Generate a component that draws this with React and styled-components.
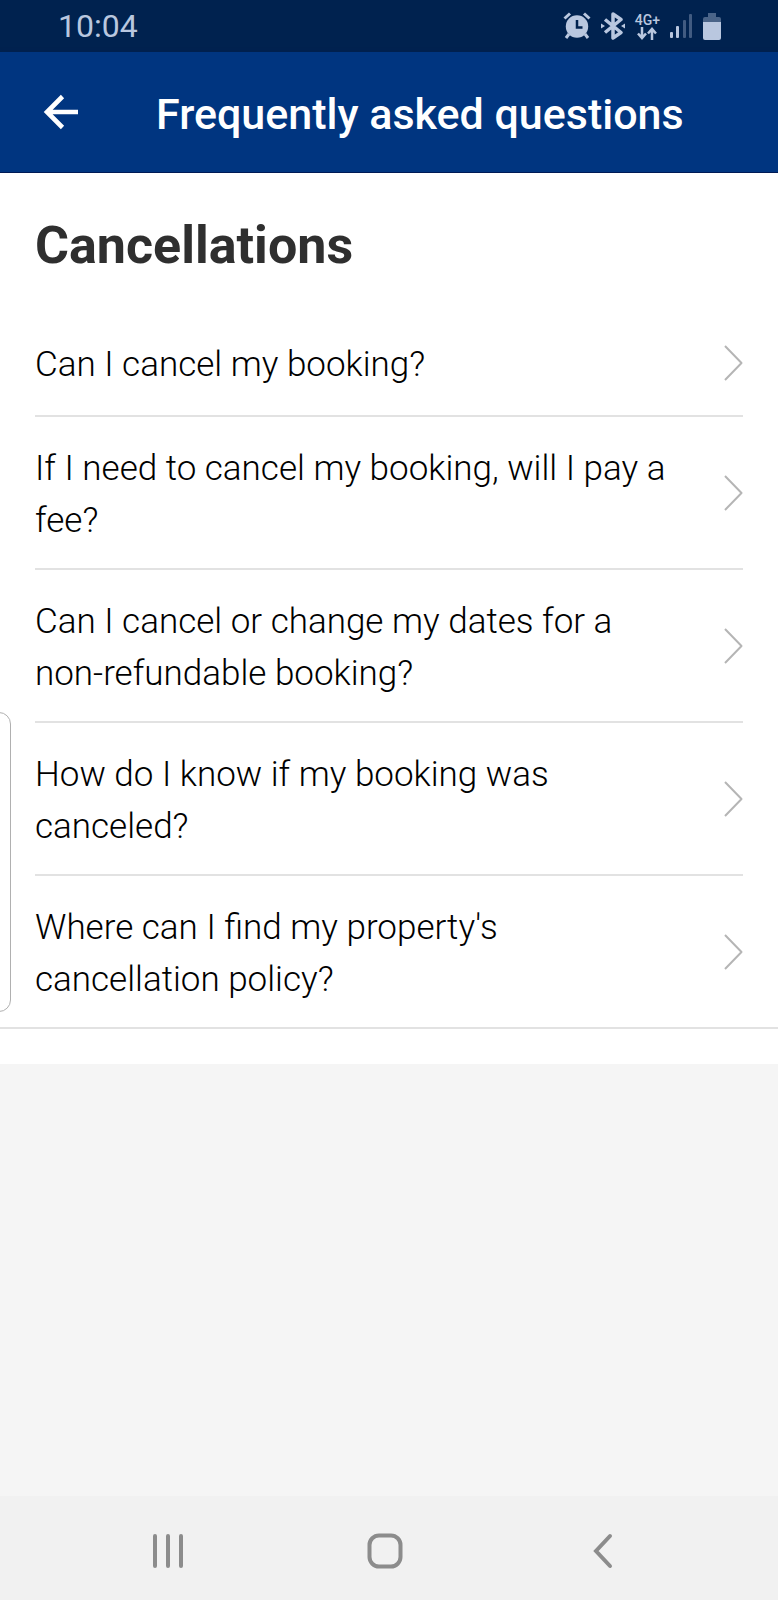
import React from "react";
import styled, { createGlobalStyle } from "styled-components";

const GlobalStyle = createGlobalStyle`
  * { box-sizing: border-box; }
  html, body { margin: 0; padding: 0; }
  body {
    background: #f5f5f5;
    font-family: Roboto, "Liberation Sans", sans-serif;
    color: #262626;
  }
`;

const Screen = styled.div`
  display: flex;
  flex-direction: column;
  min-height: 100vh;
`;

const StatusBar = styled.div`
  display: flex;
  align-items: center;
  justify-content: space-between;
  height: 52px;
  padding: 0 57px 0 58px;
  background: #00224f;
  color: #b9c7df;
`;

const Clock = styled.time`
  font-size: 32px;
  line-height: 52px;
`;

const StatusIcons = styled.div`
  display: flex;
  align-items: center;
  gap: 10px;

  svg { display: block; }
`;

const Network = styled.div`
  display: flex;
  flex-direction: column;
  align-items: center;
  font-size: 14px;
  line-height: 14px;
  font-weight: 500;
`;

const AppBar = styled.header`
  display: flex;
  align-items: center;
  height: 121px;
  padding: 0 24px;
  background: #003580;
  border-bottom: 1px solid #001a55;
  box-shadow: 0 1px 6px rgba(0, 20, 80, 0.2);
  color: #fff;
`;

const IconButton = styled.button`
  display: flex;
  align-items: center;
  justify-content: center;
  width: 72px;
  height: 72px;
  padding: 0;
  border: 0;
  background: none;
  color: inherit;
`;

const Title = styled.h1`
  margin: 0 0 0 60px;
  padding-top: 4px;
  font-size: 43px;
  line-height: 56px;
  font-weight: 500;
  white-space: nowrap;
`;

const Faq = styled.main`
  padding-bottom: 35px;
  background: #fff;
`;

const SectionTitle = styled.h2`
  margin: 0;
  padding: 41px 35px 32px;
  font-size: 52px;
  line-height: 64px;
  font-weight: 700;
  color: #2f2f2f;
`;

const Questions = styled.ul`
  margin: 0;
  padding: 0;
  border-bottom: 2px solid #e2e2e2;
  list-style: none;
`;

const Question = styled.li`
  margin: 0 35px;

  & + & { border-top: 2px solid #e2e2e2; }
`;

const QuestionLink = styled.a`
  display: flex;
  align-items: center;
  justify-content: space-between;
  gap: 40px;
  min-height: 105px;
  padding: 22px 0 21px;
  font-size: 35px;
  font-weight: 300;
  line-height: 52px;
  color: #000;
  text-decoration: none;

  svg { flex: none; }
`;

const QuestionText = styled.span`
  padding-top: 4px;
`;

const EdgeHandle = styled.div`
  position: absolute;
  top: 712px;
  left: -21px;
  width: 32px;
  height: 300px;
  border: 1px solid #b0b0b0;
  border-radius: 12px;
`;

const NavBar = styled.nav`
  display: flex;
  align-items: center;
  justify-content: space-around;
  height: 104px;
  margin-top: auto;
  padding: 6px 66px 0 59px;
  background: #f1f1f1;
  color: #8c8c8c;
`;

const questions = [
  "Can I cancel my booking?",
  "If I need to cancel my booking, will I pay a fee?",
  "Can I cancel or change my dates for a non-refundable booking?",
  "How do I know if my booking was canceled?",
  "Where can I find my property's cancellation policy?",
];

const AlarmIcon = () => (
  <svg width="28" height="28" viewBox="0 0 28 28" fill="none" stroke="currentColor" aria-hidden="true">
    <circle cx="14" cy="14.500" r="11.200" fill="currentColor" stroke="none" />
    <path d="M1.500 6.500 7 1.500M21 1.500l5.500 5" strokeWidth="3" />
    <path d="m6 22-3 4M22 22l3 4" strokeWidth="3" />
    <path d="M14 8V15.500H19.500" stroke="#00224f" strokeWidth="2.500" />
  </svg>
);

const BluetoothIcon = () => (
  <svg width="24" height="28" viewBox="0 0 24 28" fill="none" stroke="currentColor" aria-hidden="true">
    <path d="m4 7.500 16 13-8 5.500V2l8 5.500-16 13" strokeWidth="3.500" strokeLinejoin="round" />
    <path d="M0 11.500 4 14l-4 2.500zM24 11.500 20 14l4 2.500z" fill="currentColor" stroke="none" />
  </svg>
);

const DataArrows = () => (
  <svg width="20" height="13" viewBox="0 0 20 13" fill="none" stroke="currentColor" strokeWidth="2.500" aria-hidden="true">
    <path d="M5 0v11M1 6.500l4 4.500 4-4.500M15 13V2M11 6.500 15 2l4 4.500" />
  </svg>
);

const SignalIcon = () => (
  <svg width="23" height="26" viewBox="0 0 23 26" fill="currentColor" aria-hidden="true">
    <rect x="0" y="19" width="3" height="6" rx="1" />
    <rect x="6" y="13" width="3" height="12" rx="1" />
    <rect x="13" y="7" width="3" height="18" rx="1" opacity="0.35" />
    <rect x="19" y="1" width="3" height="24" rx="1" opacity="0.35" />
  </svg>
);

const BatteryIcon = () => (
  <svg width="18" height="27" viewBox="0 0 18 27" fill="currentColor" aria-hidden="true">
    <path d="M5 0h8v4h3q2 0 2 2v3H0V6q0-2 2-2h3z" opacity="0.4" />
    <path d="M0 9h18v16q0 2-2 2H2q-2 0-2-2z" />
  </svg>
);

const Chevron = () => (
  <svg width="20" height="36" viewBox="0 0 20 36" fill="none" stroke="#b5b5b5" strokeWidth="2" aria-hidden="true">
    <path d="M2 1 18.500 18 2 35" strokeLinejoin="round" />
  </svg>
);

export default function App() {
  return (
    <>
      <GlobalStyle />
      <Screen>
        <StatusBar>
          <Clock>10:04</Clock>
          <StatusIcons>
            <AlarmIcon />
            <BluetoothIcon />
            <Network>
              <span>4G+</span>
              <DataArrows />
            </Network>
            <SignalIcon />
            <BatteryIcon />
          </StatusIcons>
        </StatusBar>
        <AppBar>
          <IconButton type="button" aria-label="Back">
            <svg width="36" height="36" viewBox="0 0 36 36" fill="none" stroke="currentColor" strokeWidth="4.600">
              <path d="M20.500 2.500 5 18l15.500 15.500M5 18h31" />
            </svg>
          </IconButton>
          <Title>Frequently asked questions</Title>
        </AppBar>
        <Faq>
          <SectionTitle>Cancellations</SectionTitle>
          <Questions>
            {questions.map((text) => (
              <Question key={text}>
                <QuestionLink href="#">
                  <QuestionText>{text}</QuestionText>
                  <Chevron />
                </QuestionLink>
              </Question>
            ))}
          </Questions>
        </Faq>
        <NavBar>
          <IconButton type="button" aria-label="Recent apps">
            <svg width="32" height="36" viewBox="0 0 32 36" stroke="currentColor" strokeWidth="4" strokeLinecap="round">
              <path d="M3 3v30M16 3v30M29 3v30" />
            </svg>
          </IconButton>
          <IconButton type="button" aria-label="Home">
            <svg width="36" height="36" viewBox="0 0 36 36" fill="none" stroke="currentColor" strokeWidth="4">
              <rect x="2.500" y="2.500" width="31" height="31" rx="9.500" />
            </svg>
          </IconButton>
          <IconButton type="button" aria-label="Back">
            <svg width="20" height="36" viewBox="0 0 20 36" fill="none" stroke="currentColor" strokeWidth="4" strokeLinecap="round">
              <path d="M17 3 3 18l14 15" />
            </svg>
          </IconButton>
        </NavBar>
      </Screen>
      <EdgeHandle />
    </>
  );
}
